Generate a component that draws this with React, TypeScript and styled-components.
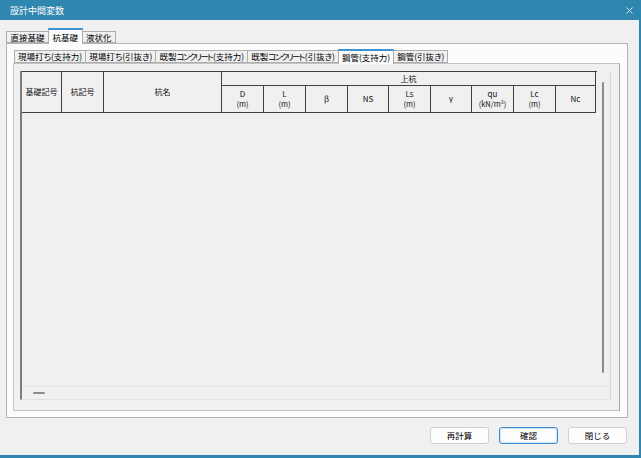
import React from "react";
import styled, { createGlobalStyle } from "styled-components";

const GlobalStyle = createGlobalStyle`
  html, body {
    margin: 0;
    padding: 0;
    background: #f0f0f0;
  }
  body {
    font-family: "Noto Sans CJK JP", "Noto Sans", sans-serif;
    color: #000;
  }
  * {
    box-sizing: border-box;
  }
`;

const BLUE = "#2f86ae";

const Window = styled.div`
  width: 641px;
  height: 458px;
  display: flex;
  flex-direction: column;
  background: #f0f0f0;
  border-right: 2px solid ${BLUE};
  border-bottom: 3px solid ${BLUE};
`;

const TitleBar = styled.div`
  height: 20px;
  flex: none;
  background: ${BLUE};
  color: #fff;
  display: flex;
  align-items: center;
  justify-content: space-between;
  padding: 1px 6px 0 10px;
  font-size: 9px;
  line-height: 1;
`;

const CloseIcon = styled.svg`
  width: 7px;
  height: 7px;
  display: block;
`;

const Content = styled.div`
  flex: 1;
  display: flex;
  flex-direction: column;
  padding: 8px 11px 0 6px;
`;

const TabStrip = styled.div<{ $height: number; $pad?: number }>`
  height: ${(p) => p.$height}px;
  flex: none;
  display: flex;
  align-items: flex-end;
  padding-left: ${(p) => p.$pad ?? 0}px;
  position: relative;
  z-index: 1;
`;

const Tab = styled.div<{ $active?: boolean; $small?: boolean }>`
  height: ${(p) => (p.$active ? (p.$small ? 15 : 16) : p.$small ? 13 : 12)}px;
  margin-bottom: ${(p) => (p.$active ? -1 : 0)}px;
  margin-right: -1px;
  padding: 0 ${(p) => (p.$small ? 3 : 3.5)}px;
  display: flex;
  align-items: center;
  font-size: 8.5px;
  font-feature-settings: "palt";
  line-height: 1;
  white-space: nowrap;
  background: ${(p) => (p.$active ? "#fcfcfc" : "#f0f0f0")};
  border: 1px solid #adadad;
  border-bottom: ${(p) => (p.$active ? "none" : "1px solid #adadad")};
  border-top: ${(p) => (p.$active ? "2px solid #3c93d4" : "1px solid #adadad")};
  position: relative;
  z-index: ${(p) => (p.$active ? 2 : 1)};
`;

const Kana = styled.span`
  letter-spacing: -1.6px;
  margin-right: 1px;
`;

const OuterPanel = styled.div`
  height: 375px;
  flex: none;
  background: #fcfcfc;
  border: 1px solid #b4b4b4;
  padding: 6px 7px 6px 6px;
  display: flex;
  flex-direction: column;
`;

const InnerPanel = styled.div`
  flex: 1;
  background: #f0f0f0;
  border: 1px solid #c2c2c2;
  border-right-color: #a8a8a8;
  padding: 7px 8px 10px 6px;
  display: flex;
`;

const Grid = styled.div`
  flex: 1;
  display: flex;
  flex-direction: column;
  background: #f0f0f0;
  border-left: 2px solid #7c7c7c;
  border-right: 1px solid #d6d6d6;
  border-bottom: 1px solid #e2e2e2;
`;

const GridMain = styled.div`
  flex: 1;
  display: flex;
`;

const GridBody = styled.div`
  flex: 1;
  display: flex;
  flex-direction: column;
`;

const Header = styled.div`
  display: grid;
  grid-template-columns: 40px 42px 118px 42px 42px 42px 41px 42px 41px 42px 42px 40px;
  grid-template-rows: 14px 27px;
  border-top: 1px solid #404040;
`;

const HeadCell = styled.div<{ $span?: string; $rows?: boolean }>`
  grid-column: ${(p) => p.$span ?? "auto"};
  grid-row: ${(p) => (p.$rows ? "1 / 3" : "auto")};
  border-right: 1px solid #404040;
  border-bottom: 1px solid #404040;
  display: flex;
  flex-direction: column;
  align-items: center;
  justify-content: center;
  font-size: 8px;
  font-feature-settings: "palt";
  line-height: 10px;
  color: #111;
  white-space: nowrap;
`;

const Unit = styled.span`
  font-size: 7.5px;
  line-height: 10px;
`;

const VScroll = styled.div`
  width: 13px;
  flex: none;
  padding: 11px 0 13px 5px;
  display: flex;
`;

const VThumb = styled.div`
  width: 2px;
  background: #8c8c8c;
  border-radius: 1px;
`;

const HScroll = styled.div`
  height: 13px;
  flex: none;
  border-top: 1px solid #e6e6e6;
  padding: 5px 0 0 11px;
`;

const HThumb = styled.div`
  width: 12px;
  height: 2px;
  background: #8c8c8c;
  border-radius: 1px;
`;

const ButtonRow = styled.div`
  display: flex;
  justify-content: flex-end;
  gap: 10px;
  margin-top: 9px;
  padding-right: 1px;
`;

const Button = styled.button<{ $default?: boolean }>`
  width: 59px;
  height: 17px;
  padding: 0;
  font-family: inherit;
  font-size: 8.5px;
  line-height: 1;
  color: #000;
  background: #fdfdfd;
  border: 1px solid ${(p) => (p.$default ? "#3c8fd6" : "#d0d0d0")};
  box-shadow: ${(p) => (p.$default ? "inset 0 0 0 1px #cfe3f5" : "none")};
  border-radius: 3px;
`;

const outerTabs = ["直接基礎", "杭基礎", "液状化"];
const innerTabs: React.ReactNode[] = [
  "現場打ち(支持力)",
  "現場打ち(引抜き)",
  <>既製<Kana>コンクリート</Kana>(支持力)</>,
  <>既製<Kana>コンクリート</Kana>(引抜き)</>,
  "鋼管(支持力)",
  "鋼管(引抜き)",
];

const cols: [string, string?][] = [
  ["D", "(m)"],
  ["L", "(m)"],
  ["β"],
  ["NS"],
  ["Ls", "(m)"],
  ["γ"],
  ["qu", "(kN/m²)"],
  ["Lc", "(m)"],
  ["Nc"],
];

export default function App() {
  return (
    <>
      <GlobalStyle />
      <Window>
        <TitleBar>
          <span>設計中間変数</span>
          <CloseIcon viewBox="0 0 7 7">
            <path d="M0.5 0.5 L6.5 6.5 M6.5 0.5 L0.5 6.5" stroke="#fff" strokeWidth="0.8" />
          </CloseIcon>
        </TitleBar>
        <Content>
          <TabStrip $height={15}>
            {outerTabs.map((t, i) => (
              <Tab key={t} $active={i === 1}>
                {t}
              </Tab>
            ))}
          </TabStrip>
          <OuterPanel>
            <TabStrip $height={13} $pad={1}>
              {innerTabs.map((t, i) => (
                <Tab key={i} $small $active={i === 4}>
                  {t}
                </Tab>
              ))}
            </TabStrip>
            <InnerPanel>
              <Grid>
                <GridMain>
                  <GridBody>
                    <Header>
                      <HeadCell $rows>基礎記号</HeadCell>
                      <HeadCell $rows>杭記号</HeadCell>
                      <HeadCell $rows>杭名</HeadCell>
                      <HeadCell $span="4 / 13">上杭</HeadCell>
                      {cols.map(([a, b]) => (
                        <HeadCell key={a}>
                          <span>{a}</span>
                          {b && <Unit>{b}</Unit>}
                        </HeadCell>
                      ))}
                    </Header>
                  </GridBody>
                  <VScroll>
                    <VThumb />
                  </VScroll>
                </GridMain>
                <HScroll>
                  <HThumb />
                </HScroll>
              </Grid>
            </InnerPanel>
          </OuterPanel>
          <ButtonRow>
            <Button>再計算</Button>
            <Button $default>確認</Button>
            <Button>閉じる</Button>
          </ButtonRow>
        </Content>
      </Window>
    </>
  );
}
